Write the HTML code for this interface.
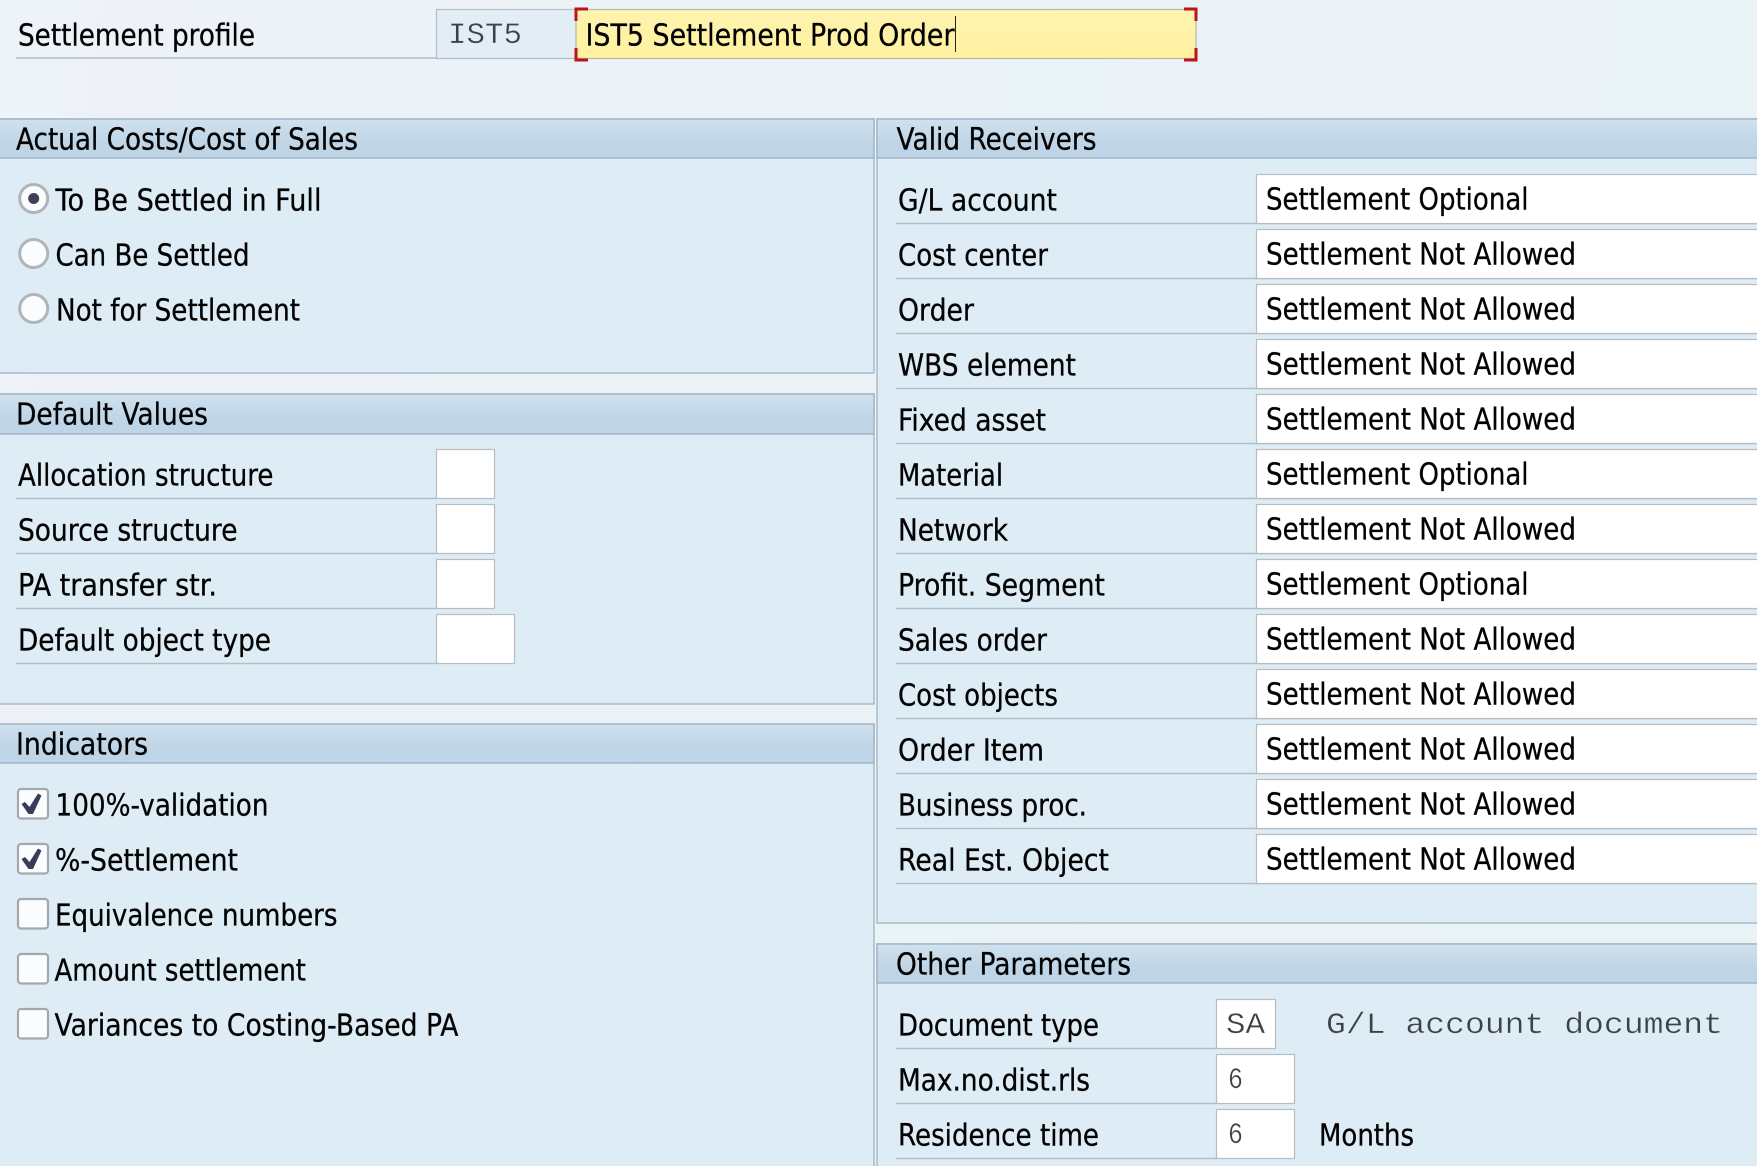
<!DOCTYPE html>
<html><head><meta charset="utf-8"><title>Settlement profile</title>
<style>
html,body{margin:0;padding:0;width:1757px;height:1166px;overflow:hidden;background:#eaf2f6}
svg{display:block;filter:blur(.3px)}
text{font-family:"DejaVu Sans","Liberation Sans",Arial,sans-serif;font-size:30px;fill:#030303;stroke:#030303;stroke-width:.3px;transform:translateY(.6px)}
.m,.mt,.mw{font-family:"Liberation Mono","Courier New",monospace;font-size:30px;fill:#3c4248;stroke-width:.35px;transform:none}
.m{stroke:#deecf5}.mt{stroke:#e3edf5}.mw{stroke:#fff}
.l{fill:none;stroke:#b3bfc8;stroke-width:1.4}
.p{fill:#deecf5;stroke:#a6b7c6;stroke-width:1.4}
.h{fill:url(#hg);stroke:#a0b3c5;stroke-width:1.4}
.f{fill:#fff;stroke:#b5bcc2;stroke-width:1.2}
.c{fill:#fbfcfd;stroke:#a2a8ae;stroke-width:2.2}
.r{fill:#fbfcfd;stroke:#b0b5ba;stroke-width:3}
.rc{fill:none;stroke:#b8151c;stroke-width:3}
</style></head><body>
<svg width="1757" height="1166" viewBox="0 0 1757 1166" xmlns="http://www.w3.org/2000/svg">
<defs>
<linearGradient id="bg" x1="0" y1="0" x2="1" y2="0.12"><stop offset="0" stop-color="#eef2f9"/><stop offset="0.45" stop-color="#ebf3f6"/><stop offset="1" stop-color="#e9f2f5"/></linearGradient>
<linearGradient id="hg" x1="0" y1="0" x2="0" y2="1"><stop offset="0" stop-color="#d0e1ee"/><stop offset="0.55" stop-color="#c0d6e7"/><stop offset="1" stop-color="#bdd3e7"/></linearGradient>
<linearGradient id="yg" x1="0" y1="0" x2="0" y2="1"><stop offset="0" stop-color="#fff3b0"/><stop offset="1" stop-color="#fff19e"/></linearGradient>
</defs>
<rect width="1757" height="1166" fill="url(#bg)"/>

<!-- top -->
<line class="l" x1="16" y1="58" x2="436" y2="58"/>
<text x="18" y="45" textLength="237" lengthAdjust="spacingAndGlyphs">Settlement profile</text>
<rect x="436.5" y="9.5" width="140" height="49" fill="#e3edf5" stroke="#b3bfc8" stroke-width="1.2"/>
<text class="mt" x="448" y="43" textLength="74" lengthAdjust="spacingAndGlyphs">IST5</text>
<rect x="576" y="9.5" width="620" height="49" fill="url(#yg)" stroke="#b5b8a8" stroke-width="1.2"/>
<text x="585.5" y="45" textLength="369" lengthAdjust="spacingAndGlyphs">IST5 Settlement Prod Order</text>
<line x1="955.5" y1="16" x2="955.5" y2="52" stroke="#222" stroke-width="1"/>
<path class="rc" d="M588 9H576V21M1184 9H1196V21M576 48V60H588M1196 48V60H1184"/>

<!-- left panels -->
<rect class="p" x="-2" y="119" width="876" height="254"/>
<rect class="h" x="-2" y="119" width="876" height="39"/>
<text x="16" y="149" textLength="342" lengthAdjust="spacingAndGlyphs">Actual Costs/Cost of Sales</text>
<circle class="r" cx="33.7" cy="198.5" r="14"/><circle cx="33.7" cy="198.5" r="5.5" fill="#3f4058"/>
<text x="55.5" y="210" textLength="266" lengthAdjust="spacingAndGlyphs">To Be Settled in Full</text>
<circle class="r" cx="33.7" cy="253.5" r="14"/>
<text x="55.5" y="265" textLength="194" lengthAdjust="spacingAndGlyphs">Can Be Settled</text>
<circle class="r" cx="33.7" cy="308.5" r="14"/>
<text x="56" y="320" textLength="244" lengthAdjust="spacingAndGlyphs">Not for Settlement</text>

<rect class="p" x="-2" y="394" width="876" height="310"/>
<rect class="h" x="-2" y="394" width="876" height="40"/>
<text x="16" y="424" textLength="192" lengthAdjust="spacingAndGlyphs">Default Values</text>
<line class="l" x1="16" y1="498.5" x2="436" y2="498.5"/><line class="l" x1="16" y1="553.5" x2="436" y2="553.5"/><line class="l" x1="16" y1="608.5" x2="436" y2="608.5"/><line class="l" x1="16" y1="663.5" x2="436" y2="663.5"/>
<text x="18" y="485" textLength="255.5" lengthAdjust="spacingAndGlyphs">Allocation structure</text>
<rect class="f" x="436.5" y="449.5" width="58" height="49"/>
<text x="18" y="540" textLength="219.5" lengthAdjust="spacingAndGlyphs">Source structure</text>
<rect class="f" x="436.5" y="504.5" width="58" height="49"/>
<text x="18" y="595" textLength="199" lengthAdjust="spacingAndGlyphs">PA transfer str.</text>
<rect class="f" x="436.5" y="559.5" width="58" height="49"/>
<text x="18" y="650" textLength="253" lengthAdjust="spacingAndGlyphs">Default object type</text>
<rect class="f" x="436.5" y="614.5" width="78" height="49"/>

<rect class="p" x="-2" y="724" width="876" height="460"/>
<rect class="h" x="-2" y="724" width="876" height="39"/>
<text x="16" y="754" textLength="132" lengthAdjust="spacingAndGlyphs">Indicators</text>
<rect class="c" x="18" y="789" width="30" height="29.5" rx="3"/><path fill="#3a3b58" d="M21.5 804L25 802L29.5 807L38 793.5L41.5 795.5L33 814L28.5 814Z"/>
<text x="55.5" y="815" textLength="213" lengthAdjust="spacingAndGlyphs">100%-validation</text>
<rect class="c" x="18" y="844" width="30" height="29.5" rx="3"/><path fill="#3a3b58" d="M21.5 859L25 857L29.5 862L38 848.5L41.5 850.5L33 869L28.5 869Z"/>
<text x="55" y="870" textLength="183" lengthAdjust="spacingAndGlyphs">%-Settlement</text>
<rect class="c" x="18" y="899" width="30" height="29.5" rx="3"/>
<text x="55" y="925" textLength="282.5" lengthAdjust="spacingAndGlyphs">Equivalence numbers</text>
<rect class="c" x="18" y="954" width="30" height="29.5" rx="3"/>
<text x="54.5" y="980" textLength="251.5" lengthAdjust="spacingAndGlyphs">Amount settlement</text>
<rect class="c" x="18" y="1009" width="30" height="29.5" rx="3"/>
<text x="54.5" y="1035" textLength="404" lengthAdjust="spacingAndGlyphs">Variances to Costing-Based PA</text>

<!-- right panels -->
<rect class="p" x="877" y="119" width="890" height="804"/>
<rect class="h" x="877" y="119" width="890" height="39"/>
<text x="896.5" y="149" textLength="200" lengthAdjust="spacingAndGlyphs">Valid Receivers</text>

<line class="l" x1="896" y1="223.5" x2="1757" y2="223.5"/><line class="l" x1="896" y1="278.5" x2="1757" y2="278.5"/><line class="l" x1="896" y1="333.5" x2="1757" y2="333.5"/><line class="l" x1="896" y1="388.5" x2="1757" y2="388.5"/><line class="l" x1="896" y1="443.5" x2="1757" y2="443.5"/><line class="l" x1="896" y1="498.5" x2="1757" y2="498.5"/><line class="l" x1="896" y1="553.5" x2="1757" y2="553.5"/><line class="l" x1="896" y1="608.5" x2="1757" y2="608.5"/><line class="l" x1="896" y1="663.5" x2="1757" y2="663.5"/><line class="l" x1="896" y1="718.5" x2="1757" y2="718.5"/><line class="l" x1="896" y1="773.5" x2="1757" y2="773.5"/><line class="l" x1="896" y1="828.5" x2="1757" y2="828.5"/><line class="l" x1="896" y1="883.5" x2="1757" y2="883.5"/>

<rect class="f" x="1256.5" y="174.5" width="520" height="49"/><rect class="f" x="1256.5" y="229.5" width="520" height="49"/><rect class="f" x="1256.5" y="284.5" width="520" height="49"/><rect class="f" x="1256.5" y="339.5" width="520" height="49"/><rect class="f" x="1256.5" y="394.5" width="520" height="49"/><rect class="f" x="1256.5" y="449.5" width="520" height="49"/><rect class="f" x="1256.5" y="504.5" width="520" height="49"/><rect class="f" x="1256.5" y="559.5" width="520" height="49"/><rect class="f" x="1256.5" y="614.5" width="520" height="49"/><rect class="f" x="1256.5" y="669.5" width="520" height="49"/><rect class="f" x="1256.5" y="724.5" width="520" height="49"/><rect class="f" x="1256.5" y="779.5" width="520" height="49"/><rect class="f" x="1256.5" y="834.5" width="520" height="49"/>

<text x="898" y="210" textLength="159" lengthAdjust="spacingAndGlyphs">G/L account</text>
<text x="898" y="265" textLength="150" lengthAdjust="spacingAndGlyphs">Cost center</text>
<text x="898" y="320" textLength="76" lengthAdjust="spacingAndGlyphs">Order</text>
<text x="898" y="375" textLength="178" lengthAdjust="spacingAndGlyphs">WBS element</text>
<text x="898" y="430" textLength="148" lengthAdjust="spacingAndGlyphs">Fixed asset</text>
<text x="898" y="485" textLength="105" lengthAdjust="spacingAndGlyphs">Material</text>
<text x="898" y="540" textLength="110" lengthAdjust="spacingAndGlyphs">Network</text>
<text x="898" y="595" textLength="207" lengthAdjust="spacingAndGlyphs">Profit. Segment</text>
<text x="898" y="650" textLength="149" lengthAdjust="spacingAndGlyphs">Sales order</text>
<text x="898" y="705" textLength="160" lengthAdjust="spacingAndGlyphs">Cost objects</text>
<text x="898" y="760" textLength="146" lengthAdjust="spacingAndGlyphs">Order Item</text>
<text x="898" y="815" textLength="189" lengthAdjust="spacingAndGlyphs">Business proc.</text>
<text x="898" y="870" textLength="211" lengthAdjust="spacingAndGlyphs">Real Est. Object</text>

<text x="1266" y="209" textLength="262.5" lengthAdjust="spacingAndGlyphs">Settlement Optional</text>
<text x="1266" y="264" textLength="310" lengthAdjust="spacingAndGlyphs">Settlement Not Allowed</text>
<text x="1266" y="319" textLength="310" lengthAdjust="spacingAndGlyphs">Settlement Not Allowed</text>
<text x="1266" y="374" textLength="310" lengthAdjust="spacingAndGlyphs">Settlement Not Allowed</text>
<text x="1266" y="429" textLength="310" lengthAdjust="spacingAndGlyphs">Settlement Not Allowed</text>
<text x="1266" y="484" textLength="262.5" lengthAdjust="spacingAndGlyphs">Settlement Optional</text>
<text x="1266" y="539" textLength="310" lengthAdjust="spacingAndGlyphs">Settlement Not Allowed</text>
<text x="1266" y="594" textLength="262.5" lengthAdjust="spacingAndGlyphs">Settlement Optional</text>
<text x="1266" y="649" textLength="310" lengthAdjust="spacingAndGlyphs">Settlement Not Allowed</text>
<text x="1266" y="704" textLength="310" lengthAdjust="spacingAndGlyphs">Settlement Not Allowed</text>
<text x="1266" y="759" textLength="310" lengthAdjust="spacingAndGlyphs">Settlement Not Allowed</text>
<text x="1266" y="814" textLength="310" lengthAdjust="spacingAndGlyphs">Settlement Not Allowed</text>
<text x="1266" y="869" textLength="310" lengthAdjust="spacingAndGlyphs">Settlement Not Allowed</text>

<rect class="p" x="877" y="944" width="890" height="240"/>
<rect class="h" x="877" y="944" width="890" height="39"/>
<text x="896" y="974" textLength="235" lengthAdjust="spacingAndGlyphs">Other Parameters</text>
<line class="l" x1="896" y1="1048.5" x2="1216" y2="1048.5"/><line class="l" x1="896" y1="1103.5" x2="1216" y2="1103.5"/><line class="l" x1="896" y1="1158.5" x2="1216" y2="1158.5"/>
<text x="898" y="1035" textLength="201" lengthAdjust="spacingAndGlyphs">Document type</text>
<rect class="f" x="1216.5" y="999.5" width="59" height="49"/>
<text class="mw" x="1226" y="1033" textLength="39" lengthAdjust="spacingAndGlyphs">SA</text>
<text class="m" x="1326" y="1033" textLength="397" lengthAdjust="spacingAndGlyphs">G/L account document</text>
<text x="898" y="1090" textLength="192" lengthAdjust="spacingAndGlyphs">Max.no.dist.rls</text>
<rect class="f" x="1216.5" y="1054.5" width="78" height="49"/>
<text class="mw" x="1228" y="1088" textLength="15" lengthAdjust="spacingAndGlyphs">6</text>
<text x="898" y="1145" textLength="201" lengthAdjust="spacingAndGlyphs">Residence time</text>
<rect class="f" x="1216.5" y="1109.5" width="78" height="49"/>
<text class="mw" x="1228" y="1143" textLength="15" lengthAdjust="spacingAndGlyphs">6</text>
<text x="1319" y="1145" textLength="95" lengthAdjust="spacingAndGlyphs">Months</text>
</svg>
</body></html>
